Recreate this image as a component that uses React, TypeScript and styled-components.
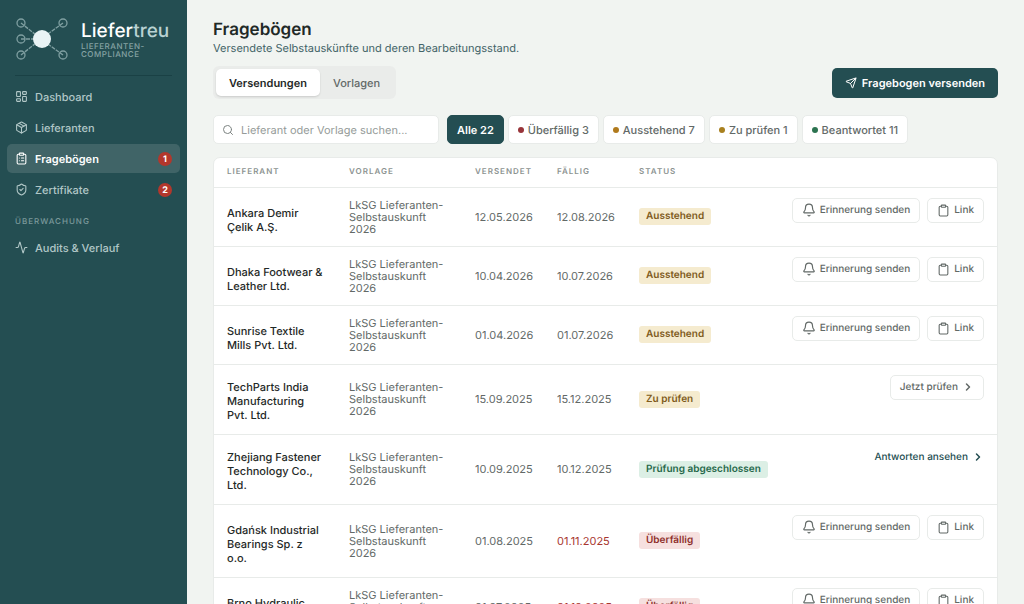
import React from 'react';
import styled, { createGlobalStyle } from 'styled-components';
import { Activity, Bell, ChevronRight, Clipboard, ClipboardList, LayoutDashboard, Package, Search, Send, ShieldCheck } from 'lucide-react';

const c = {
  teal: '#244e52',
  page: '#f1f4f1',
  line: '#e8ebe9',
  ink: '#1f2927',
  grey: '#626967',
};

const Global = createGlobalStyle`
  *, *::before, *::after { box-sizing: border-box; }
  body { margin: 0; background: ${c.page}; color: ${c.ink}; font: 11px/14px Inter, "Liberation Sans", sans-serif; text-rendering: geometricPrecision; }
  button, input { font: inherit; text-rendering: inherit; }
  a { color: inherit; text-decoration: none; }
`;

const Shell = styled.div`
  display: flex;
  align-items: flex-start;
  height: 100vh;
  overflow: hidden;
`;

const Sidebar = styled.aside`
  flex: 0 0 187px;
  min-width: 0;
  height: 100vh;
  padding: 14px 7px;
  background: ${c.teal};
  color: #a9c0c0;
`;

const Brand = styled.div`
  display: flex;
  align-items: center;
  gap: 13px;
  height: 62px;
  margin: 0 8px 6px;
  padding-bottom: 12px;
  border-bottom: 1px solid #1a4145;
`;

const BrandName = styled.div`
  font-size: 19px;
  line-height: 22px;
  font-weight: 500;
  color: #fff;
  span { color: #b9d2d3; }
`;

const BrandClaim = styled.div`
  font-size: 8px;
  line-height: 8px;
  font-weight: 500;
  letter-spacing: 0.5px;
  color: #86a3a4;
`;

const Nav = styled.nav`
  display: flex;
  flex-direction: column;
  gap: 2px;
`;

const NavLink = styled.a<{ $active?: boolean }>`
  display: flex;
  align-items: center;
  gap: 7px;
  height: 29px;
  padding: 0 8px;
  border-radius: 5px;
  font-size: 11px;
  font-weight: ${p => (p.$active ? 600 : 500)};
  color: ${p => (p.$active ? '#fff' : '#b1c7c7')};
  background: ${p => (p.$active ? '#406467' : 'transparent')};
`;

const NavHeading = styled.h2`
  margin: 10px 8px 5px;
  font-size: 8px;
  line-height: 14px;
  font-weight: 500;
  letter-spacing: 1px;
  color: #7c9a9c;
`;

const Count = styled.span`
  margin-left: auto;
  width: 14px;
  height: 14px;
  border-radius: 7px;
  background: #b3372c;
  color: #fff;
  font-size: 9px;
  line-height: 15px;
  font-weight: 700;
  text-align: center;
`;

const Main = styled.main`
  flex: 1;
  min-width: 0;
  padding: 19px 26px;
`;

const Title = styled.h1`
  margin: 0;
  font-size: 17px;
  line-height: 22px;
  font-weight: 600;
`;

const Subtitle = styled.p`
  margin: 0 0 11px;
  color: #426367;
  line-height: 14px;
`;

const Bar = styled.div`
  display: flex;
  align-items: center;
  justify-content: space-between;
  margin-bottom: 16px;
`;

const Tabs = styled.div`
  display: flex;
  padding: 3px;
  border-radius: 6px;
  background: #eaecea;
`;

const Tab = styled.button<{ $active?: boolean }>`
  height: 27px;
  padding: 0 13px;
  border: 0;
  border-radius: 5px;
  font-weight: ${p => (p.$active ? 600 : 500)};
  color: ${p => (p.$active ? c.ink : c.grey)};
  background: ${p => (p.$active ? '#fff' : 'transparent')};
  box-shadow: ${p => (p.$active ? '0 1px 2px #0002' : 'none')};
`;

const Primary = styled.button`
  display: flex;
  align-items: center;
  gap: 5px;
  height: 30px;
  padding: 0 13px;
  border: 0;
  border-radius: 5px;
  font-weight: 600;
  color: #fff;
  background: ${c.teal};
`;

const Filters = styled.div`
  display: flex;
  gap: 4px;
  margin-bottom: 13px;
`;

const SearchBox = styled.label`
  display: flex;
  align-items: center;
  gap: 7px;
  flex: 0 0 226px;
  height: 29px;
  margin-right: 4px;
  padding: 0 8px;
  border: 1px solid ${c.line};
  border-radius: 5px;
  background: #fff;
  color: #7d8482;
  input {
    flex: 1;
    min-width: 0;
    padding: 0;
    border: 0;
    outline: 0;
    background: transparent;
  }
  input::placeholder { color: #959b99; opacity: 1; }
`;

const Chip = styled.button<{ $active?: boolean }>`
  display: flex;
  align-items: center;
  gap: 4px;
  height: 29px;
  padding: 0 9px;
  border: 1px solid ${p => (p.$active ? c.teal : c.line)};
  border-radius: 5px;
  font-weight: ${p => (p.$active ? 600 : 500)};
  color: ${p => (p.$active ? '#fff' : c.grey)};
  background: ${p => (p.$active ? c.teal : '#fff')};
`;

const Dot = styled.i<{ $color: string }>`
  width: 6px;
  height: 6px;
  border-radius: 3px;
  background: ${p => p.$color};
`;

const Card = styled.section`
  border: 1px solid ${c.line};
  border-radius: 7px;
  background: #fff;
  overflow: hidden;
`;

const Table = styled.table`
  width: 100%;
  table-layout: fixed;
  border-collapse: collapse;
`;

const Th = styled.th<{ $width?: number }>`
  width: ${p => (p.$width ? `${p.$width}px` : 'auto')};
  height: 29px;
  padding: 0 13px 2px;
  border-bottom: 1px solid ${c.line};
  text-align: left;
  font-size: 8px;
  font-weight: 600;
  letter-spacing: 1px;
  color: #8b9290;
`;

const Td = styled.td`
  padding: 11px 13px;
  border-bottom: 1px solid ${c.line};
  line-height: 12px;
  color: ${c.grey};
`;

const SupplierTd = styled(Td)<{ $open: boolean }>`
  padding-top: ${p => (p.$open ? 18 : 15)}px;
  padding-bottom: 12px;
  line-height: 14px;
  font-weight: 500;
  color: ${c.ink};
`;

const DateTd = styled(Td)<{ $late?: boolean }>`
  color: ${p => (p.$late ? '#a8362f' : c.grey)};
`;

const ActionTd = styled(Td)`
  padding-top: 10px;
  vertical-align: top;
`;

const tones = {
  amber: ['#f5ebcf', '#805b1c'],
  green: ['#dcefe5', '#27694b'],
  red: ['#f6e0df', '#8f302c'],
};

const Badge = styled.span<{ $tone: keyof typeof tones }>`
  display: inline-block;
  vertical-align: middle;
  padding: 0 7px;
  border-radius: 3px;
  font-size: 10px;
  line-height: 17px;
  font-weight: 600;
  white-space: nowrap;
  background: ${p => tones[p.$tone][0]};
  color: ${p => tones[p.$tone][1]};
`;

const Actions = styled.div`
  display: flex;
  justify-content: flex-end;
  gap: 7px;
`;

const Small = styled.button`
  display: flex;
  align-items: center;
  gap: 4px;
  height: 25px;
  padding: 0 9px;
  border: 1px solid ${c.line};
  border-radius: 5px;
  background: #fff;
  color: ${c.grey};
  font-size: 10px;
  font-weight: 500;
  white-space: nowrap;
`;

const AnswerLink = styled.a`
  display: flex;
  align-items: center;
  gap: 4px;
  height: 25px;
  font-size: 10px;
  font-weight: 500;
  color: ${c.teal};
`;

type Kind = 'remind' | 'review' | 'answers';
type Row = { name: string; sent: string; due: string; late?: boolean; status: string; tone: keyof typeof tones; kind: Kind };

const rows: Row[] = [
  { name: 'Ankara Demir Çelik A.Ş.', sent: '12.05.2026', due: '12.08.2026', status: 'Ausstehend', tone: 'amber', kind: 'remind' },
  { name: 'Dhaka Footwear & Leather Ltd.', sent: '10.04.2026', due: '10.07.2026', status: 'Ausstehend', tone: 'amber', kind: 'remind' },
  { name: 'Sunrise Textile Mills Pvt. Ltd.', sent: '01.04.2026', due: '01.07.2026', status: 'Ausstehend', tone: 'amber', kind: 'remind' },
  { name: 'TechParts India Manufacturing Pvt. Ltd.', sent: '15.09.2025', due: '15.12.2025', status: 'Zu prüfen', tone: 'amber', kind: 'review' },
  { name: 'Zhejiang Fastener Technology Co., Ltd.', sent: '10.09.2025', due: '10.12.2025', status: 'Prüfung abgeschlossen', tone: 'green', kind: 'answers' },
  { name: 'Gdańsk Industrial Bearings Sp. z o.o.', sent: '01.08.2025', due: '01.11.2025', late: true, status: 'Überfällig', tone: 'red', kind: 'remind' },
  { name: 'Brno Hydraulic s.r.o.', sent: '01.07.2025', due: '01.10.2025', late: true, status: 'Überfällig', tone: 'red', kind: 'remind' },
];

const chips = [
  { label: 'Überfällig 3', color: '#98343a' },
  { label: 'Ausstehend 7', color: '#b07a1c' },
  { label: 'Zu prüfen 1', color: '#a8801f' },
  { label: 'Beantwortet 11', color: '#2c7350' },
];

const Logo = () => (
  <svg width="53" height="44" viewBox="0 0 53 44" fill="none" stroke="#7f9fa1" strokeWidth="1.3" aria-hidden="true">
    <path d="M6 6 26 22M48 6 26 22M6 22h20M6 38l20-16M48 38 26 22" strokeDasharray="4 1" />
    <circle cx="6" cy="6" r="4" />
    <circle cx="48" cy="6" r="4" />
    <circle cx="6" cy="22" r="4" />
    <circle cx="6" cy="38" r="4" />
    <circle cx="48" cy="38" r="4" />
    <circle cx="27" cy="22" r="9" fill="#e9f3f5" stroke="none" />
  </svg>
);

const RowActions = ({ kind }: { kind: Kind }) => (
  <Actions>
    {kind === 'remind' && (
      <>
        <Small><Bell size={14} strokeWidth={2} />Erinnerung senden</Small>
        <Small><Clipboard size={13} strokeWidth={2} />Link</Small>
      </>
    )}
    {kind === 'review' && <Small>Jetzt prüfen<ChevronRight size={12} strokeWidth={3} /></Small>}
    {kind === 'answers' && <AnswerLink href="#antworten">Antworten ansehen<ChevronRight size={12} strokeWidth={3} /></AnswerLink>}
  </Actions>
);

export default function App() {
  return (
    <Shell>
      <Global />
      <Sidebar>
        <Brand>
          <Logo />
          <div>
            <BrandName>Liefer<span>treu</span></BrandName>
            <BrandClaim>LIEFERANTEN-<br />COMPLIANCE</BrandClaim>
          </div>
        </Brand>
        <Nav>
          <NavLink href="#dashboard"><LayoutDashboard size={13} />Dashboard</NavLink>
          <NavLink href="#lieferanten"><Package size={13} />Lieferanten</NavLink>
          <NavLink href="#frageboegen" $active><ClipboardList size={13} />Fragebögen<Count>1</Count></NavLink>
          <NavLink href="#zertifikate"><ShieldCheck size={13} />Zertifikate<Count>2</Count></NavLink>
        </Nav>
        <NavHeading>ÜBERWACHUNG</NavHeading>
        <Nav>
          <NavLink href="#audits"><Activity size={13} />Audits &amp; Verlauf</NavLink>
        </Nav>
      </Sidebar>
      <Main>
        <Title>Fragebögen</Title>
        <Subtitle>Versendete Selbstauskünfte und deren Bearbeitungsstand.</Subtitle>
        <Bar>
          <Tabs>
            <Tab $active>Versendungen</Tab>
            <Tab>Vorlagen</Tab>
          </Tabs>
          <Primary><Send size={12} />Fragebogen versenden</Primary>
        </Bar>
        <Filters>
          <SearchBox>
            <Search size={12} />
            <input type="search" aria-label="Suche" placeholder="Lieferant oder Vorlage suchen..." />
          </SearchBox>
          <Chip $active>Alle 22</Chip>
          {chips.map(chip => (
            <Chip key={chip.label}><Dot $color={chip.color} />{chip.label}</Chip>
          ))}
        </Filters>
        <Card>
          <Table>
            <thead>
              <tr>
                <Th $width={122}>LIEFERANT</Th>
                <Th $width={126}>VORLAGE</Th>
                <Th $width={82}>VERSENDET</Th>
                <Th $width={82}>FÄLLIG</Th>
                <Th $width={153}>STATUS</Th>
                <Th aria-label="Aktionen" />
              </tr>
            </thead>
            <tbody>
              {rows.map(row => (
                <tr key={row.name}>
                  <SupplierTd $open={row.kind === 'remind'}>{row.name}</SupplierTd>
                  <Td>LkSG Lieferanten-Selbstauskunft 2026</Td>
                  <DateTd>{row.sent}</DateTd>
                  <DateTd $late={row.late}>{row.due}</DateTd>
                  <Td><Badge $tone={row.tone}>{row.status}</Badge></Td>
                  <ActionTd><RowActions kind={row.kind} /></ActionTd>
                </tr>
              ))}
            </tbody>
          </Table>
        </Card>
      </Main>
    </Shell>
  );
}
